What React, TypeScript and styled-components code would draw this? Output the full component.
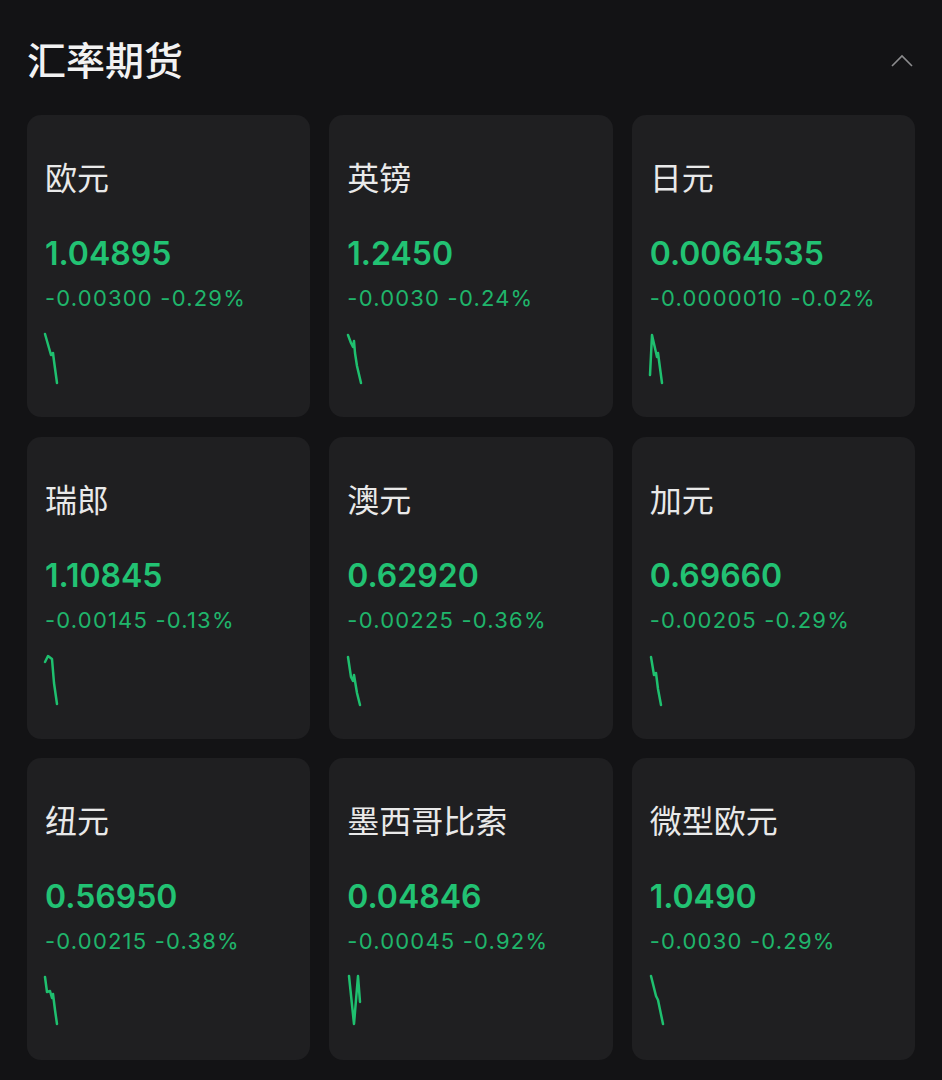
import React from "react";
import styled, { createGlobalStyle } from "styled-components";

type Quote = {
  name: string;
  price: string;
  change: string;
  spark: string; // path in a 20x54 box
};

const quotes: Quote[] = [
  { name: "欧元", price: "1.04895", change: "-0.00300 -0.29%", spark: "M2,3 L8,24 L10,22 L11,30 L14,52" },
  { name: "英镑", price: "1.2450", change: "-0.0030 -0.24%", spark: "M3,4 L6,12 L8,16 L9,10 L10,22 L12,35 L16,52" },
  { name: "日元", price: "0.0064535", change: "-0.0000010 -0.02%", spark: "M2,44 L4,4 L9,26 L10,22 L14,52" },
  { name: "瑞郎", price: "1.10845", change: "-0.00145 -0.13%", spark: "M2,9 L5,3 L9,6 L11,30 L14,51" },
  { name: "澳元", price: "0.62920", change: "-0.00225 -0.36%", spark: "M3,4 L6,24 L8,28 L9,22 L12,40 L15,52" },
  { name: "加元", price: "0.69660", change: "-0.00205 -0.29%", spark: "M3,4 L6,22 L8,20 L10,36 L13,52" },
  { name: "纽元", price: "0.56950", change: "-0.00215 -0.38%", spark: "M2,3 L4,18 L7,17 L9,24 L10,20 L12,36 L14,50" },
  { name: "墨西哥比索", price: "0.04846", change: "-0.00045 -0.92%", spark: "M4,2 L9,50 L13,2 L15,28" },
  { name: "微型欧元", price: "1.0490", change: "-0.0030 -0.29%", spark: "M3,2 L8,22 L10,26 L15,50" },
];

const GlobalStyle = createGlobalStyle`
  html, body {
    margin: 0;
    padding: 0;
    background: #131315;
  }
  body {
    font-family: Inter, "Noto Sans CJK SC", sans-serif;
  }
`;

const Page = styled.div`
  width: 942px;
  min-height: 1080px;
  background: #131315;
  padding: 35px 27px 0;
  box-sizing: border-box;
`;

const Header = styled.div`
  display: flex;
  align-items: center;
  justify-content: space-between;
  height: 46px;
  margin-bottom: 34px;
`;

const Title = styled.h1`
  margin: 0;
  font-family: "Noto Sans CJK SC", sans-serif;
  font-size: 39px;
  line-height: 46px;
  font-weight: 500;
  color: #f2f2f2;
`;

const Chevron = styled.svg`
  margin-right: 2px;
  margin-top: 6px;
`;

const Grid = styled.div`
  display: grid;
  grid-template-columns: repeat(3, 1fr);
  column-gap: 19px;
  row-gap: 19.5px;
`;

const Card = styled.div`
  height: 302px;
  box-sizing: border-box;
  background: #1f1f21;
  border-radius: 14px;
  padding: 42px 18px 0;
  display: flex;
  flex-direction: column;
`;

const Name = styled.div`
  font-family: "Noto Sans CJK SC", sans-serif;
  font-size: 32px;
  line-height: 38px;
  color: #e9e9e9;
`;

const Price = styled.div`
  margin-top: 39px;
  font-family: Inter, sans-serif;
  font-size: 32px;
  line-height: 40px;
  font-weight: 600;
  color: #22c273;
`;

const Change = styled.div`
  margin-top: 10px;
  font-family: Inter, sans-serif;
  font-size: 22px;
  line-height: 28px;
  letter-spacing: 1.2px;
  color: #1fb56b;
`;

const Spark = styled.svg`
  margin-top: 19px;
  margin-left: -2px;
`;

const QuoteCard: React.FC<{ quote: Quote }> = ({ quote }) => (
  <Card>
    <Name>{quote.name}</Name>
    <Price>{quote.price}</Price>
    <Change>{quote.change}</Change>
    <Spark width="20" height="54" viewBox="0 0 20 54">
      <path
        d={quote.spark}
        fill="none"
        stroke="#1fc06f"
        strokeWidth="2.5"
        strokeLinejoin="round"
        strokeLinecap="round"
      />
    </Spark>
  </Card>
);

const App: React.FC = () => {
  return (
    <Page>
      <GlobalStyle />
      <Header>
        <Title>汇率期货</Title>
        <Chevron width="22" height="14" viewBox="0 0 22 14">
          <path d="M1,12 L11,2 L21,12" fill="none" stroke="#8c8c8e" strokeWidth="1.6" />
        </Chevron>
      </Header>
      <Grid>
        {quotes.map((q) => (
          <QuoteCard key={q.name} quote={q} />
        ))}
      </Grid>
    </Page>
  );
};

export default App;
